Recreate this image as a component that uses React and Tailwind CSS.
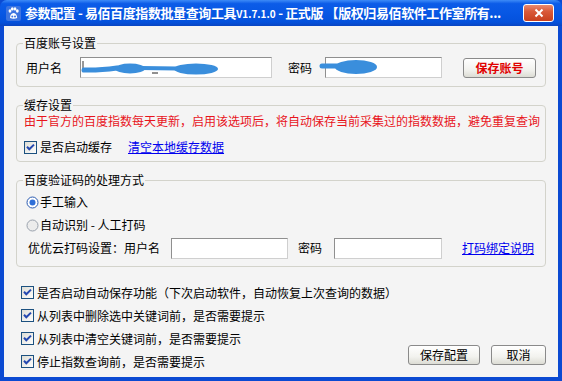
const CJK = "font-['Noto_Sans_CJK_SC','Noto_Sans',sans-serif]";

function Check() {
  return (
    <svg width="13" height="13" viewBox="0 0 13 13" className="shrink-0">
      <defs>
        <linearGradient id="cbg" x1="0" y1="0" x2="1" y2="1">
          <stop offset="0" stopColor="#dcdcd4" />
          <stop offset="1" stopColor="#ffffff" />
        </linearGradient>
      </defs>
      <rect x="0.5" y="0.5" width="12" height="12" fill="url(#cbg)" stroke="#1c5180" />
      <path d="M3 5.8 L5.3 8.3 L10 3.6" fill="none" stroke="#2448b0" strokeWidth="2" />
    </svg>
  );
}

function Radio({ on }) {
  return (
    <svg width="13" height="13" viewBox="0 0 13 13" className="shrink-0">
      <circle cx="6.5" cy="6.5" r="5.5" fill={on ? "#ffffff" : "#ececec"} stroke={on ? "#2a5ab0" : "#9aa2ad"} />
      {on && <circle cx="6.5" cy="6.5" r="3" fill="#2f6fd8" />}
    </svg>
  );
}

function Input({ w, children }) {
  return (
    <div
      className="relative h-[21px] shrink-0 bg-white border border-[#cfcfcf] border-t-[#8f8f8f] border-l-[#8f8f8f]"
      style={{ width: w }}
    >
      {children}
    </div>
  );
}

function Btn({ w, children, cls = "" }) {
  return (
    <div
      className={`h-[20px] shrink-0 flex items-center justify-center rounded-[3px] border border-[#8a8a8a] bg-[linear-gradient(to_bottom,#ffffff_0%,#f2f2ee_60%,#dcdcd4_100%)] ${cls}`}
      style={{ width: w }}
    >
      {children}
    </div>
  );
}

function Icon() {
  return (
    <svg width="15" height="15" viewBox="0 0 15 15" className="shrink-0">
      <rect x="0" y="0" width="15" height="15" rx="2" fill="#3c74e0" />
      <ellipse cx="4" cy="5" rx="1.4" ry="1.8" fill="#fff" />
      <ellipse cx="6.3" cy="2.9" rx="1.4" ry="1.7" fill="#fff" />
      <ellipse cx="9" cy="2.9" rx="1.4" ry="1.7" fill="#fff" />
      <ellipse cx="11.3" cy="5" rx="1.4" ry="1.8" fill="#fff" />
      <path d="M4 12 Q4 7.5 7.6 7 Q11 7.5 11.2 12 Q7.6 13.5 4 12Z" fill="#fff" />
      <circle cx="6.3" cy="10.5" r="1" fill="#3c74e0" />
      <circle cx="9" cy="10.5" r="1" fill="#3c74e0" />
    </svg>
  );
}

function Close() {
  return (
    <div className="ml-auto w-[31px] h-[18px] shrink-0 rounded-[3px] border border-white flex items-center justify-center bg-[linear-gradient(to_bottom,#e88a70_0%,#d95a3a_40%,#c8401e_100%)]">
      <svg width="10" height="10" viewBox="0 0 10 10">
        <path d="M1.5 1.5 L8.5 8.5 M8.5 1.5 L1.5 8.5" stroke="#fff" strokeWidth="2" />
      </svg>
    </div>
  );
}

function Fieldset({ title, className = "", children }) {
  return (
    <fieldset className={`border border-[#d3d3cb] rounded-[4px] p-0 m-0 ${className}`}>
      <legend className="ml-[6px] px-[1px] leading-[14px]">{title}</legend>
      {children}
    </fieldset>
  );
}

export default function App() {
  return (
    <div className={`w-[562px] h-[381px] flex flex-col ${CJK} text-[12px] leading-[16px] text-black bg-[#0b4ad2] overflow-hidden`}>
      <div className="h-[26px] shrink-0 flex items-center pl-[6px] pr-[8px] rounded-t-[7px] bg-[linear-gradient(to_bottom,#3d8bf7_0%,#0c5ce8_14%,#0757e4_50%,#0451dc_85%,#0a45c2_100%)]">
        <Icon />
        <div className="ml-[4px] shrink-0 text-white font-bold text-[13px] leading-[16px] tracking-[-0.4px] whitespace-nowrap">
          参数配置 - 易佰百度指数批量查询工具<span className="text-[10px] tracking-[0px]">V1.7.1.0</span> - 正式版 【版权归易佰软件工作室所有...
        </div>
        <Close />
      </div>

      <div className="flex-1 mx-[4px] mb-[4px] bg-[#f4f4f4] flex flex-col px-[12px] pt-[10px]">
        <Fieldset title="百度账号设置" className="pb-[8px]">
          <div className="mt-[7px] pl-[9px] flex items-center h-[21px]">
            <span className="w-[36px] shrink-0">用户名</span>
            <div className="ml-[18px]">
              <Input w={192}>
                <svg className="absolute left-0 top-0" width="192" height="19" viewBox="0 0 192 19">
                  <line x1="2" y1="3" x2="2" y2="12" stroke="#333" strokeWidth="1" />
                  <path d="M3 12 C 15 12.5, 25 11.5, 36 10" stroke="#3a8edc" strokeWidth="5" strokeLinecap="round" fill="none" />
                  <ellipse cx="49" cy="10.5" rx="15" ry="5" fill="#3a8edc" />
                  <path d="M60 10 L 96 10.5" stroke="#3a8edc" strokeWidth="4" strokeLinecap="round" />
                  <line x1="71" y1="15" x2="77" y2="15" stroke="#222" strokeWidth="1" />
                  <ellipse cx="115" cy="11" rx="22" ry="5.5" fill="#3a8edc" />
                </svg>
              </Input>
            </div>
            <span className="ml-[16px] shrink-0">密码</span>
            <div className="ml-[13px]">
              <Input w={117}>
                <svg className="absolute -left-[5px] -top-[1px] overflow-visible" width="70" height="21" viewBox="0 0 70 21">
                  <path d="M1 9 L 16 9" stroke="#3a8edc" strokeWidth="5" strokeLinecap="round" />
                  <ellipse cx="35" cy="10" rx="21" ry="7" fill="#3a8edc" />
                </svg>
              </Input>
            </div>
            <Btn w={73} cls="ml-[21px] text-[#e00000] font-bold">保存账号</Btn>
          </div>
        </Fieldset>

        <Fieldset title="缓存设置" className="mt-[11px] pb-[6px]">
          <div className="pl-[7px]">
            <div className="mt-[1px] text-[#e8141c] whitespace-nowrap">
              由于官方的百度指数每天更新，启用该选项后，将自动保存当前采集过的指数数据，避免重复查询
            </div>
            <div className="mt-[10px] flex items-center h-[16px]">
              <Check />
              <span className="ml-[3px]">是否启动缓存</span>
              <span className="ml-[16px] text-[#0000ee] underline">清空本地缓存数据</span>
            </div>
          </div>
        </Fieldset>

        <Fieldset title="百度验证码的处理方式" className="mt-[11px] pb-[8px]">
          <div className="pl-[9px]">
            <div className="mt-[7px] flex items-center h-[16px]">
              <Radio on />
              <span className="ml-[1px]">手工输入</span>
            </div>
            <div className="mt-[7px] flex items-center h-[16px]">
              <Radio />
              <span className="ml-[1px]">自动识别 - 人工打码</span>
            </div>
            <div className="mt-[5px] flex items-center h-[20px]">
              <span className="ml-[2px] whitespace-nowrap">优优云打码设置：用户名</span>
              <div className="ml-[11px]">
                <Input w={117} />
              </div>
              <span className="ml-[10px]">密码</span>
              <div className="ml-[12px]">
                <Input w={108} />
              </div>
              <span className="ml-[20px] text-[#0000ee] underline">打码绑定说明</span>
            </div>
          </div>
        </Fieldset>

        <div className="mt-[14px] flex">
          <div className="flex flex-col ml-[5px]">
            {[
              "是否启动自动保存功能（下次启动软件，自动恢复上次查询的数据）",
              "从列表中删除选中关键词前，是否需要提示",
              "从列表中清空关键词前，是否需要提示",
              "停止指数查询前，是否需要提示",
            ].map((t) => (
              <div key={t} className="h-[23px] flex items-center whitespace-nowrap">
                <Check />
                <span className="ml-[3px]">{t}</span>
              </div>
            ))}
          </div>
          <div className="ml-auto self-end mb-[8px] flex gap-[11px]">
            <Btn w={72}>保存配置</Btn>
            <Btn w={55}>取消</Btn>
          </div>
        </div>
      </div>
    </div>
  );
}
